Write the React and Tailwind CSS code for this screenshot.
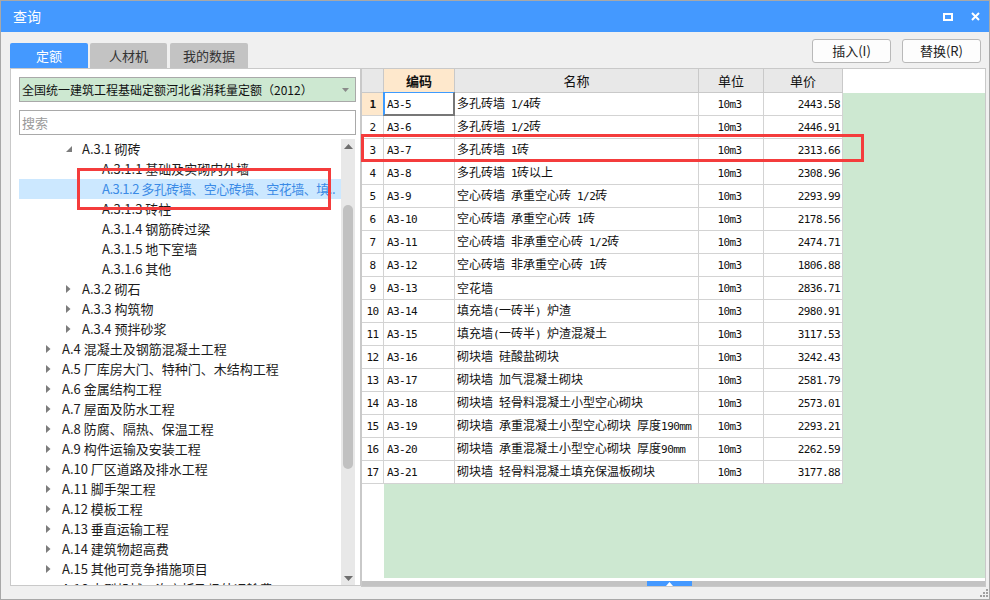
import React from 'react';

// 左侧定额树
const tree = [
  { level: 1, label: 'A.3.1 砌砖', icon: 'open' },
  { level: 2, label: 'A.3.1.1 基础及实砌内外墙' },
  { level: 2, label: 'A.3.1.2 多孔砖墙、空心砖墙、空花墙、填..', selected: true },
  { level: 2, label: 'A.3.1.3 砖柱' },
  { level: 2, label: 'A.3.1.4 钢筋砖过梁' },
  { level: 2, label: 'A.3.1.5 地下室墙' },
  { level: 2, label: 'A.3.1.6 其他' },
  { level: 1, label: 'A.3.2 砌石', icon: 'closed' },
  { level: 1, label: 'A.3.3 构筑物', icon: 'closed' },
  { level: 1, label: 'A.3.4 预拌砂浆', icon: 'closed' },
  { level: 0, label: 'A.4 混凝土及钢筋混凝土工程', icon: 'closed' },
  { level: 0, label: 'A.5 厂库房大门、特种门、木结构工程', icon: 'closed' },
  { level: 0, label: 'A.6 金属结构工程', icon: 'closed' },
  { level: 0, label: 'A.7 屋面及防水工程', icon: 'closed' },
  { level: 0, label: 'A.8 防腐、隔热、保温工程', icon: 'closed' },
  { level: 0, label: 'A.9 构件运输及安装工程', icon: 'closed' },
  { level: 0, label: 'A.10 厂区道路及排水工程', icon: 'closed' },
  { level: 0, label: 'A.11 脚手架工程', icon: 'closed' },
  { level: 0, label: 'A.12 模板工程', icon: 'closed' },
  { level: 0, label: 'A.13 垂直运输工程', icon: 'closed' },
  { level: 0, label: 'A.14 建筑物超高费', icon: 'closed' },
  { level: 0, label: 'A.15 其他可竞争措施项目', icon: 'closed' },
  { level: 0, label: 'A.16 大型机械一次安拆及场外运输费', icon: 'closed' },
];

const padByLevel = ['pl-[22px]', 'pl-[42px]', 'pl-[62px]'];

// 右侧定额列表
const rows = [
  ['A3-5', '多孔砖墙 1/4砖', '2443.58'],
  ['A3-6', '多孔砖墙 1/2砖', '2446.91'],
  ['A3-7', '多孔砖墙 1砖', '2313.66'],
  ['A3-8', '多孔砖墙 1砖以上', '2308.96'],
  ['A3-9', '空心砖墙 承重空心砖 1/2砖', '2293.99'],
  ['A3-10', '空心砖墙 承重空心砖 1砖', '2178.56'],
  ['A3-11', '空心砖墙 非承重空心砖 1/2砖', '2474.71'],
  ['A3-12', '空心砖墙 非承重空心砖 1砖', '1806.88'],
  ['A3-13', '空花墙', '2836.71'],
  ['A3-14', '填充墙(一砖半) 炉渣', '2980.91'],
  ['A3-15', '填充墙(一砖半) 炉渣混凝土', '3117.53'],
  ['A3-16', '砌块墙 硅酸盐砌块', '3242.43'],
  ['A3-17', '砌块墙 加气混凝土砌块', '2581.79'],
  ['A3-18', '砌块墙 轻骨料混凝土小型空心砌块', '2573.01'],
  ['A3-19', '砌块墙 承重混凝土小型空心砌块 厚度190mm', '2293.21'],
  ['A3-20', '砌块墙 承重混凝土小型空心砌块 厚度90mm', '2262.59'],
  ['A3-21', '砌块墙 轻骨料混凝土填充保温板砌块', '3177.88'],
];

// 半角字符用等宽字体，模拟宋体的半角宽度
const Mixed = ({ text }) => (
  <span className="whitespace-pre">
    {text.split(/([\x20-\x7e]+)/).map((part, i) =>
      /^[\x20-\x7e]+$/.test(part) ? (
        <span key={i} className="font-['DejaVu_Sans_Mono',monospace] text-[11px] tracking-[-0.6px]">
          {part}
        </span>
      ) : (
        <span key={i}>{part}</span>
      )
    )}
  </span>
);

const TreeArrow = ({ icon }) => {
  if (icon === 'open')
    return (
      <svg width="6" height="6" viewBox="0 0 6 6" className="ml-[1px]">
        <path d="M6 0V6H0Z" fill="#7c7c7c" />
      </svg>
    );
  if (icon === 'closed')
    return (
      <svg width="5" height="8" viewBox="0 0 5 8">
        <path d="M0 0L4.5 4L0 8Z" fill="#7c7c7c" />
      </svg>
    );
  return null;
};

const App = () => {
  return (
    <div className="relative w-[990px] h-[600px] bg-[#f0f0f0] border border-[#a8a8a8] flex flex-col font-['Noto_Sans_CJK_SC',sans-serif] overflow-hidden">
      {/* 标题栏 */}
      <div className="h-[31px] bg-[#4499ff] flex items-center justify-between pl-[12px] pr-[9px] shrink-0">
        <span className="text-white text-[14px]">查询</span>
        <div className="flex items-center gap-[18px]">
          <svg width="10" height="8" viewBox="0 0 10 8">
            <rect x="1" y="1" width="8" height="6" fill="none" stroke="white" strokeWidth="2" />
          </svg>
          <svg width="9" height="9" viewBox="0 0 9 9">
            <path d="M1 1L8 8M8 1L1 8" stroke="white" strokeWidth="2" />
          </svg>
        </div>
      </div>

      {/* 页签 + 按钮 */}
      <div className="h-[36px] flex items-end justify-between pl-[9px] pr-[8px] shrink-0">
        <div className="flex gap-[2px]">
          <div className="w-[78px] h-[25px] rounded-t-[2px] bg-[#4499ff] text-white text-[13px] flex items-center justify-center">定额</div>
          <div className="w-[77px] h-[25px] rounded-t-[2px] bg-[#c3c3c3] text-[#333] text-[13px] flex items-center justify-center">人材机</div>
          <div className="w-[78px] h-[25px] ml-[1px] rounded-t-[2px] bg-[#c3c3c3] text-[#333] text-[13px] flex items-center justify-center">我的数据</div>
        </div>
        <div className="flex gap-[11px] self-start mt-[7px]">
          <button className="w-[79px] h-[24px] rounded-[3px] border border-[#b9b9b9] bg-[#fdfdfd] text-[13px] text-[#222]">插入(I)</button>
          <button className="w-[79px] h-[24px] rounded-[3px] border border-[#b9b9b9] bg-[#fdfdfd] text-[13px] text-[#222]">替换(R)</button>
        </div>
      </div>

      {/* 主体 */}
      <div className="flex pl-[9px] h-[519px]">
        {/* 左侧面板 */}
        <div className="w-[351px] h-[518px] border border-[#c9c9c9] bg-white pl-[8px] pr-[4px] pt-[8px] flex flex-col">
          <div className="h-[25px] border border-[#a9a9a9] bg-[#cde8d1] flex items-center justify-between pl-[2px] pr-[6px]">
            <span className="text-[12px] text-[#111] whitespace-nowrap">全国统一建筑工程基础定额河北省消耗量定额（2012）</span>
            <svg width="7" height="4" viewBox="0 0 7 4">
              <path d="M0 0H7L3.5 4Z" fill="#8a8a8a" />
            </svg>
          </div>
          <div className="h-[25px] mt-[8px] border border-[#a9a9a9] flex items-center pl-[2px]">
            <span className="text-[13px] text-[#9a9a9a]">搜索</span>
          </div>
          <div className="mt-[4px] h-[446px] flex">
            <div className="w-[322px] overflow-hidden">
              {tree.map((item, i) => (
                <div
                  key={i}
                  className={`h-[20px] flex items-center whitespace-nowrap text-[13px] overflow-hidden ${padByLevel[item.level]} ${
                    item.selected ? 'bg-[#cce8ff] text-[#3b8be6]' : 'text-[#1c1c1c]'
                  }`}
                >
                  <div className="w-[14px] shrink-0 flex justify-center items-center">
                    <TreeArrow icon={item.icon} />
                  </div>
                  <span className={`ml-[7px] shrink-0 ${item.selected ? 'tracking-[-0.5px]' : ''}`}>{item.label}</span>
                </div>
              ))}
            </div>
            {/* 竖向滚动条 */}
            <div className="w-[14px] bg-[#e8e8e8] flex flex-col items-center">
              <svg width="9" height="5" viewBox="0 0 9 5" className="mt-[5px]">
                <path d="M0 5L4.5 0L9 5Z" fill="#6e6e6e" />
              </svg>
              <div className="w-[10px] h-[264px] mt-[56px] rounded-[5px] bg-[#c1c1c1]" />
              <div className="flex-1" />
              <svg width="9" height="5" viewBox="0 0 9 5" className="mb-[4px]">
                <path d="M0 0L4.5 5L9 0Z" fill="#6e6e6e" />
              </svg>
            </div>
          </div>
        </div>

        {/* 右侧表格 */}
        <div className="w-[625px] h-[519px] border border-[#c9c9c9] bg-white flex flex-col text-[12px] text-[#111]">
          <div className="h-[24px] flex shrink-0 text-[13px]">
            <div className="w-[22px] bg-[#e8e8e8] border-r border-b border-[#c9c9c9]" />
            <div className="w-[71px] bg-[#fee8cc] border-r border-b border-[#c9c9c9] flex items-center justify-center font-bold">编码</div>
            <div className="w-[244px] bg-[#e8e8e8] border-r border-b border-[#c9c9c9] flex items-center justify-center">名称</div>
            <div className="w-[65px] bg-[#e8e8e8] border-r border-b border-[#c9c9c9] flex items-center justify-center">单位</div>
            <div className="w-[79px] bg-[#e8e8e8] border-r border-b border-[#c9c9c9] flex items-center justify-center">单价</div>
          </div>
          <div className="flex-1 flex flex-col bg-[#cde8d1]">
            {rows.map((r, i) => (
              <div key={i} className="h-[23px] flex">
                <div
                  className={`w-[22px] border-r border-b border-[#d3d3d3] flex items-center justify-center ${
                    i === 0 ? 'bg-[#fee8cc] font-bold' : 'bg-white'
                  }`}
                >
                  <Mixed text={String(i + 1)} />
                </div>
                <div className="relative w-[71px] bg-white border-r border-b border-[#d3d3d3] flex items-center pl-[3px]">
                  <Mixed text={r[0]} />
                  {i === 0 && (
                    <div className="absolute -top-px -left-px -right-px -bottom-px border-t border-l-2 border-r-2 border-b-2 border-t-[#3d9bff] border-l-[#3d9bff] border-r-[#777] border-b-[#777]" />
                  )}
                </div>
                <div className="w-[244px] bg-white border-r border-b border-[#d3d3d3] flex items-center pl-[2px] whitespace-nowrap">
                  <Mixed text={r[1]} />
                </div>
                <div className="w-[65px] bg-white border-r border-b border-[#d3d3d3] flex items-center justify-center pr-[3px]">
                  <Mixed text="10m3" />
                </div>
                <div className="w-[79px] bg-white border-r border-b border-[#d3d3d3] flex items-center justify-end pr-[2px]">
                  <Mixed text={r[2]} />
                </div>
              </div>
            ))}
            <div className="flex-1 flex">
              <div className="w-[22px] bg-white" />
            </div>
          </div>
          <div className="h-[3px] bg-white shrink-0" />
          {/* 横向滚动条 */}
          <div className="h-[5px] bg-[#c3c3c3] flex shrink-0">
            <div className="w-[285px]" />
            <div className="w-[45px] bg-[#4499ff] flex items-center justify-center">
              <svg width="7" height="4" viewBox="0 0 7 4">
                <path d="M0 4L3.5 0L7 4Z" fill="white" />
              </svg>
            </div>
          </div>
        </div>
      </div>

      {/* 右下角拖拽角 */}
      <svg width="8" height="8" viewBox="0 0 8 8" className="absolute right-[1px] bottom-[2px]">
        <rect x="6" y="0" width="2" height="2" fill="#a0a0a0" />
        <rect x="3" y="3" width="2" height="2" fill="#a0a0a0" />
        <rect x="6" y="3" width="2" height="2" fill="#a0a0a0" />
        <rect x="0" y="6" width="2" height="2" fill="#a0a0a0" />
        <rect x="3" y="6" width="2" height="2" fill="#a0a0a0" />
        <rect x="6" y="6" width="2" height="2" fill="#a0a0a0" />
      </svg>

      {/* 红色标注框 */}
      <div className="absolute left-[76px] top-[167px] w-[254px] h-[42px] border-[3px] border-[#f43c3c]" />
      <div className="absolute left-[360px] top-[133px] w-[503px] h-[28px] border-[3px] border-[#f43c3c]" />
    </div>
  );
};

export default App;
